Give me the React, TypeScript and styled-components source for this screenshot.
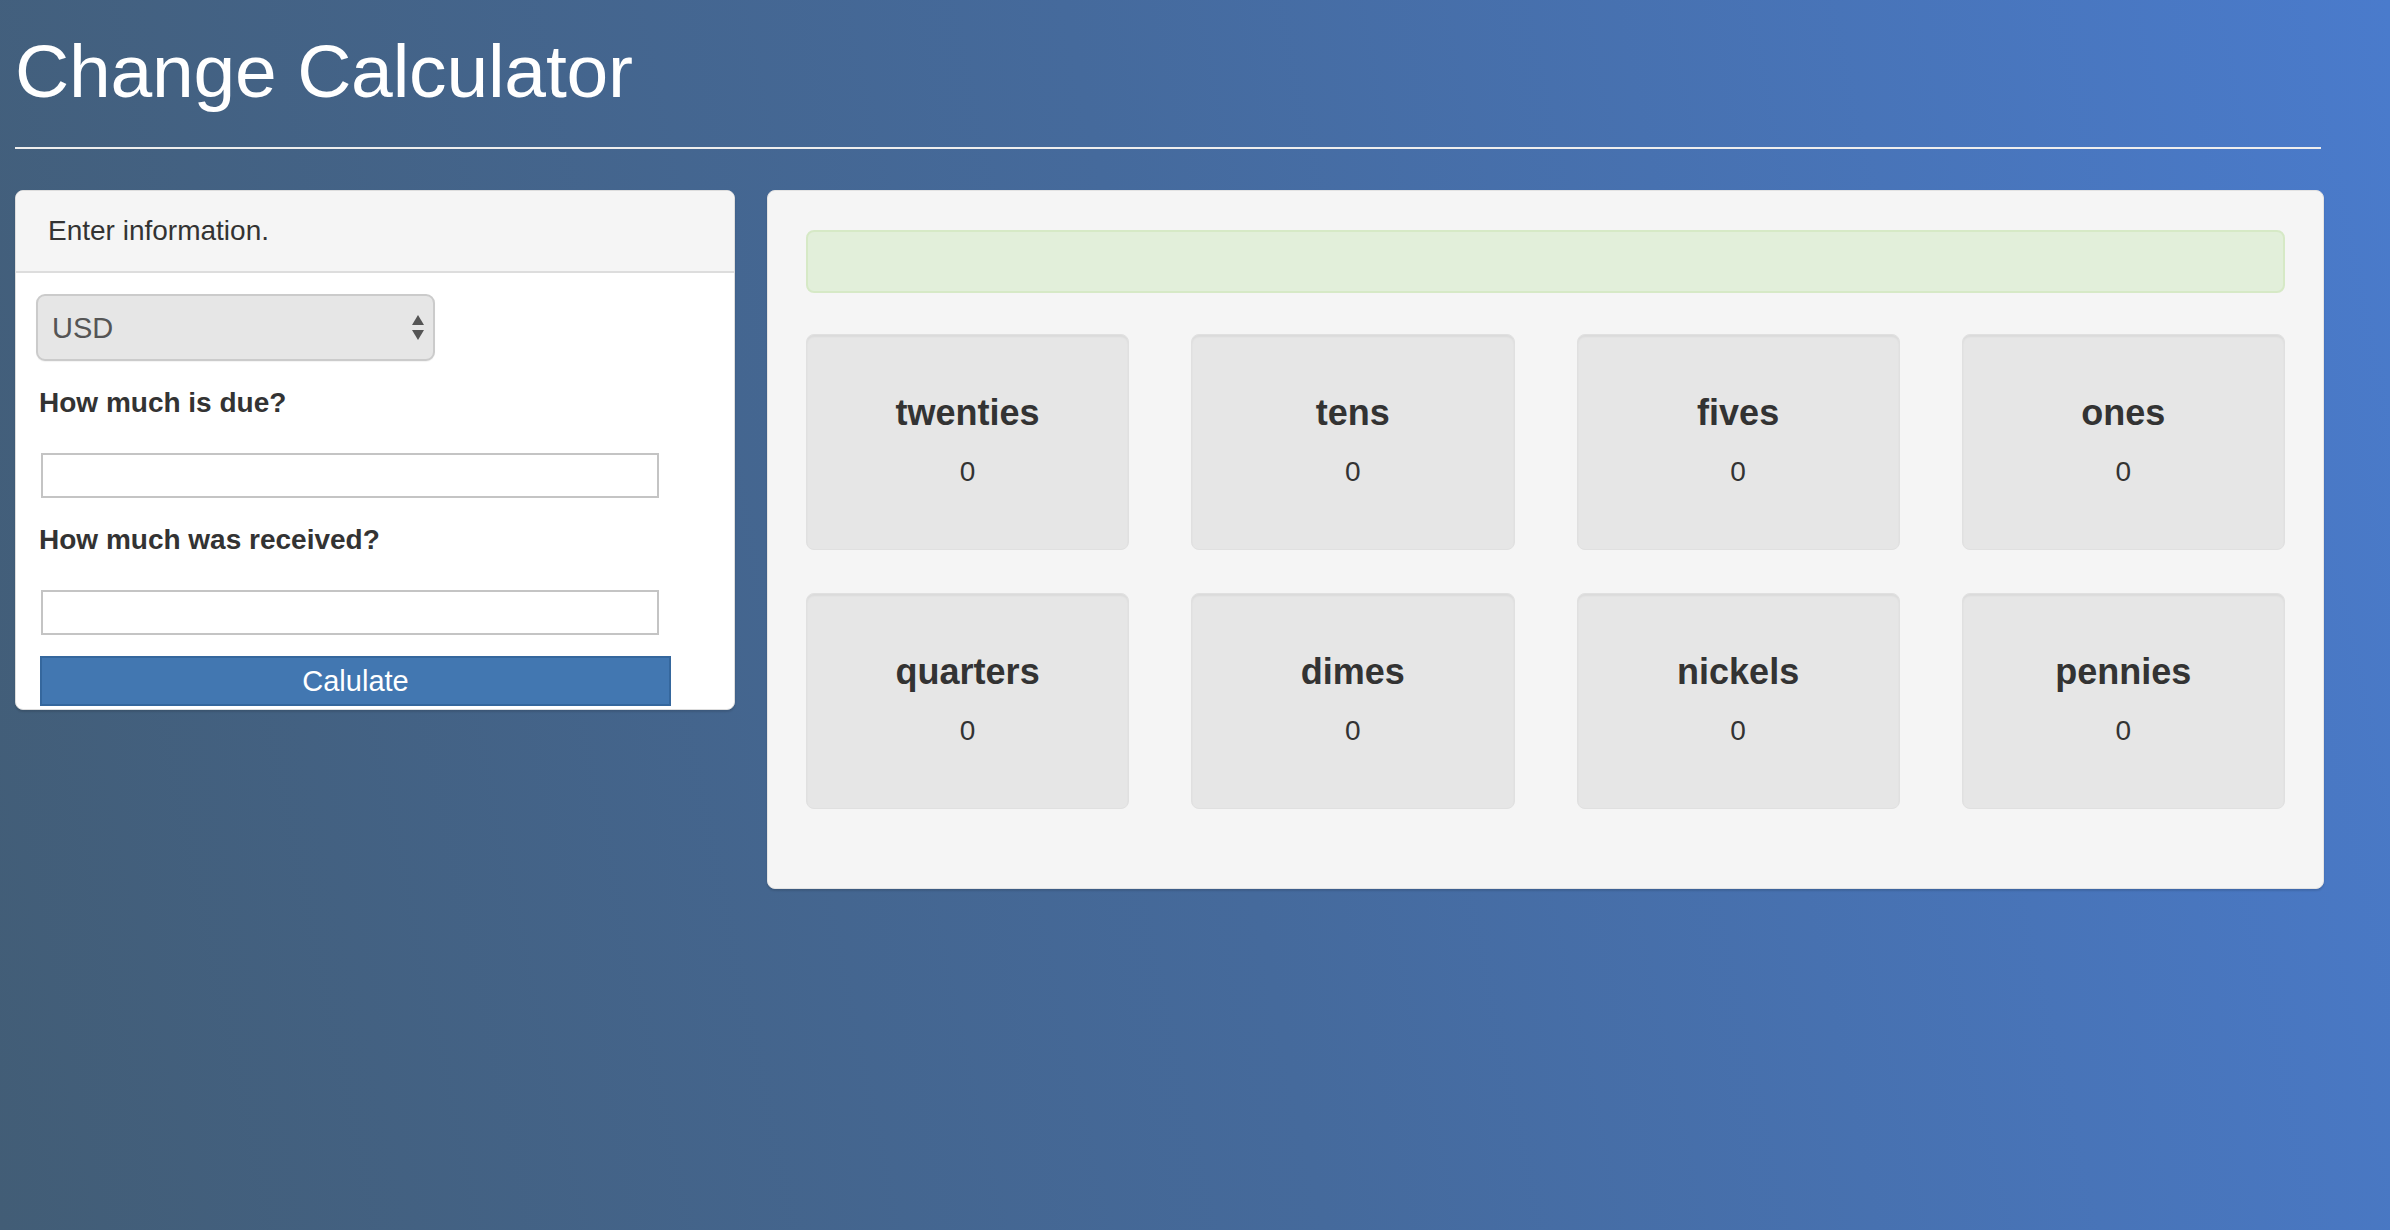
import React, { FunctionComponent } from 'react';
import styled, { createGlobalStyle } from 'styled-components';

const GlobalStyle = createGlobalStyle`
  html, body {
    margin: 0;
    padding: 0;
    height: 100%;
  }

  body {
    font-family: 'Liberation Sans', Arial, Helvetica, sans-serif;
    color: #333;
    background: linear-gradient(78deg, #425d76 0%, #456a9c 50%, #4a7bcc 100%);
    background-attachment: fixed;
  }

  #root {
    min-height: 100vh;
  }
`;

const Page = styled.div`
  width: 2309px;
  padding-left: 15px;
`;

const Header = styled.header`
  padding-top: 34px;
  padding-bottom: 38px;
  border-bottom: 2px solid #eee;
  margin-right: 3px;
`;

const Title = styled.h1`
  margin: 0;
  font-size: 75px;
  line-height: 75px;
  font-weight: 400;
  color: #fff;
  letter-spacing: -0.2px;
`;

const Columns = styled.div`
  display: flex;
  align-items: flex-start;
  gap: 32px;
  margin-top: 41px;
`;

const Panel = styled.section`
  flex: 0 0 720px;
  box-sizing: border-box;
  background: #fff;
  border: 1px solid #ddd;
  border-radius: 8px;
  box-shadow: 0 2px 2px rgba(0, 0, 0, 0.12);
`;

const PanelHeading = styled.div`
  padding: 20px 32px;
  font-size: 28px;
  line-height: 40px;
  background: #f5f5f5;
  border-bottom: 2px solid #ddd;
  border-radius: 7px 7px 0 0;
  color: #333;
`;

const PanelBody = styled.div`
  display: flex;
  flex-direction: column;
  align-items: flex-start;
  padding: 21px 20px 3px;
`;

const SelectWrap = styled.div`
  position: relative;
  width: 399px;
  height: 67px;
`;

const Select = styled.select`
  appearance: none;
  width: 100%;
  height: 100%;
  box-sizing: border-box;
  padding: 0 14px;
  font-family: inherit;
  font-size: 29px;
  color: #555;
  background: #e6e6e6;
  border: 2px solid #cbcbcb;
  border-radius: 9px;
  box-shadow: 0 1px 1px rgba(0, 0, 0, 0.05);
  outline: none;
`;

const Arrows = styled.svg`
  position: absolute;
  right: 10px;
  top: 50%;
  transform: translateY(-50%);
  pointer-events: none;
`;

interface LabelProps {
  gap: number;
}

const Label = styled.label<LabelProps>`
  margin-top: ${({ gap }) => gap}px;
  margin-left: 3px;
  font-size: 28px;
  line-height: 40px;
  font-weight: 700;
  color: #333;
`;

const Input = styled.input`
  width: 618px;
  height: 45px;
  box-sizing: border-box;
  margin: 30px 0 0 5px;
  padding: 0 10px;
  font-family: inherit;
  font-size: 28px;
  background: #fff;
  border: 2px solid #c4c4c4;
  border-radius: 0;
  outline: none;
`;

const Button = styled.button`
  width: 631px;
  height: 50px;
  margin: 21px 0 0 4px;
  padding: 0;
  font-family: inherit;
  font-size: 29px;
  color: #fff;
  background: #4277b1;
  border: 2px solid #35679d;
  cursor: pointer;
`;

const ResultPanel = styled.section`
  flex: 0 0 1557px;
  box-sizing: border-box;
  padding: 39px 38px 79px;
  background: #f5f5f5;
  border: 1px solid #e3e3e3;
  border-radius: 8px;
  box-shadow: 0 2px 2px rgba(0, 0, 0, 0.12);
`;

const Alert = styled.div`
  height: 63px;
  box-sizing: border-box;
  margin-bottom: 41px;
  background: #e2efda;
  border: 2px solid #d6e9c6;
  border-radius: 8px;
`;

const Grid = styled.div`
  display: grid;
  grid-template-columns: repeat(4, 1fr);
  column-gap: 62px;
  row-gap: 43px;
`;

const Well = styled.div`
  height: 216px;
  box-sizing: border-box;
  padding-top: 58px;
  text-align: center;
  background: #e6e6e6;
  border: 1px solid #e0e0e0;
  border-radius: 8px;
  box-shadow: inset 0 2px 2px rgba(0, 0, 0, 0.05);
`;

const WellTitle = styled.h4`
  margin: 0 0 19px;
  font-size: 36px;
  line-height: 40px;
  font-weight: 700;
  color: #333;
`;

const WellValue = styled.p`
  margin: 0;
  font-size: 28px;
  line-height: 40px;
  color: #333;
`;

const denominations = ['twenties', 'tens', 'fives', 'ones', 'quarters', 'dimes', 'nickels', 'pennies'];

const Denomination: FunctionComponent<{ name: string; count: number }> = ({ name, count }) => (
  <Well>
    <WellTitle>{name}</WellTitle>
    <WellValue>{count}</WellValue>
  </Well>
);

const App: FunctionComponent = () => (
  <>
    <GlobalStyle />
    <Page>
      <Header>
        <Title>Change Calculator</Title>
      </Header>
      <Columns>
        <Panel>
          <PanelHeading>Enter information.</PanelHeading>
          <PanelBody>
            <SelectWrap>
              <Select defaultValue="USD">
                <option value="USD">USD</option>
              </Select>
              <Arrows width="14" height="30" viewBox="0 0 14 30">
                <polygon points="7,2 13,12 1,12" fill="#555" />
                <polygon points="1,17 13,17 7,27" fill="#555" />
              </Arrows>
            </SelectWrap>
            <Label gap={22}>How much is due?</Label>
            <Input type="text" />
            <Label gap={22}>How much was received?</Label>
            <Input type="text" />
            <Button type="button">Calulate</Button>
          </PanelBody>
        </Panel>
        <ResultPanel>
          <Alert />
          <Grid>
            {denominations.map((name) => (
              <Denomination key={name} name={name} count={0} />
            ))}
          </Grid>
        </ResultPanel>
      </Columns>
    </Page>
  </>
);

export default App;
